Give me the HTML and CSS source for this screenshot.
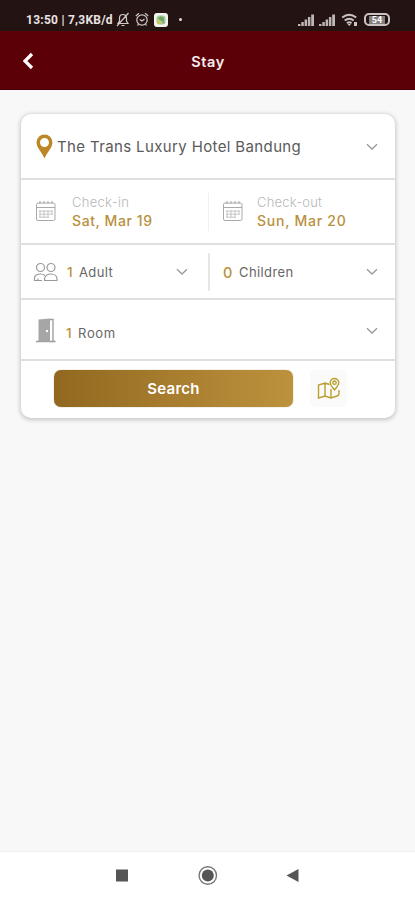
FILE: index.html
```html
<!DOCTYPE html>
<html lang="en">
<head>
<meta charset="utf-8">
<title>Stay</title>
<link rel="stylesheet" href="styles.css">
</head>
<body>
<svg width="0" height="0" class="defs">
  <symbol id="chev" viewBox="0 0 12 8"><path d="M1 1.2 6 6l5-4.8" fill="none" stroke="#999" stroke-width="1.3"/></symbol>
  <symbol id="cal" viewBox="0 0 22 22"><g fill="none" stroke="#a9a9a9"><rect x="1.5" y="3" width="18.500" height="17.500" rx="1.500"/><path d="M1.500 7.500h18.500M5 1v3M9 1v3M13 1v3M17 1v3"/><path d="M4 11.200h13.500M4 14.200h13.500M4 17.200h10M5 10v8M9 10v8M13 10v8M17 10v5" stroke="#c5c5c5" stroke-width="1"/></g></symbol>
  <symbol id="bars" viewBox="0 0 17 12"><path d="M0 10h2.500v2H0zM3.300 8h2.500v4H3.300zM6.600 5.500h2.500V12H6.600zM9.900 3h2.500v9H9.900zM13.200.5h2.800V12h-2.800z" fill="#bdb6b5"/></symbol>
</svg>
<div class="status">
  <span class="clock">13:50 | 7,3KB/d</span>
  <svg class="bell" viewBox="0 0 14 15"><path d="M2 11.500h10L10.500 9V6a3.500 3.500 0 0 0-7 0v3zM5.500 13.500h3M12.500 1 1 14" fill="none" stroke="#cfc9c8" stroke-width="1.200"/></svg>
  <svg class="alarm" viewBox="0 0 14 15"><g fill="none" stroke="#cfc9c8" stroke-width="1.200"><circle cx="7" cy="8" r="5.200"/><path d="M.8 4l3.200-2.700M13.200 4 10 1.300M4.700 7.500 7 9l2.500-2M3.500 12 2.500 13.500M10.500 12l1 1.500"/></g></svg>
  <svg class="app" viewBox="0 0 14 14"><rect width="14" height="14" rx="3" fill="#f1f3ed"/><rect x="2.500" y="2.500" width="9" height="9" rx="3" fill="#a9c795"/><path d="M4 5q3-3 6 0v3H7z" fill="#6da660"/><path d="M3 8l3-1 2 3-3 1z" fill="#d4c84c"/><path d="M8 8l3 1-2 2z" fill="#6aa5b5"/></svg>
  <i class="dot"></i>
  <svg class="sig" viewBox="0 0 17 12"><use href="#bars"/></svg>
  <svg class="sig sig2" viewBox="0 0 17 12"><use href="#bars"/></svg>
  <svg class="wifi" viewBox="0 0 18 14"><g fill="none" stroke="#c9c3c2" stroke-width="2"><path d="M1.200 4.500q7-5.500 14 0M3.700 7.500q4.500-3.500 9 0M6 10.200q2.200-1.800 4.500 0"/></g><path d="M6.500 11h3.500l-1.700 2zM13 9h3v4h-3z" fill="#c9c3c2"/></svg>
  <span class="batt"><b>54</b></span>
</div>
<header class="bar">
  <svg class="back" viewBox="0 0 12 18"><path d="M10 2 3 9l7 7" fill="none" stroke="#fff" stroke-width="3.200"/></svg>
  <h1>Stay</h1>
</header>
<main>
  <section class="card">
    <div class="row hotel">
      <svg class="pin" viewBox="0 0 17 25"><path fill-rule="evenodd" d="M8.500.5A8 8 0 0 0 .5 8.500c0 5 5 9 8 16 3-7 8-11 8-16a8 8 0 0 0-8-8zm0 3.500a4.500 4.500 0 1 1 0 9 4.500 4.500 0 0 1 0-9z" fill="#bd8629"/></svg>
      <span class="name">The Trans Luxury Hotel Bandung</span>
      <svg class="chev"><use href="#chev"/></svg>
    </div>
    <div class="row dates">
      <div class="half">
        <svg class="cal"><use href="#cal"/></svg>
        <div class="date"><span class="label in">Check-in</span><span class="value sat">Sat, Mar 19</span></div>
      </div>
      <div class="half split">
        <svg class="cal"><use href="#cal"/></svg>
        <div class="date"><span class="label out">Check-out</span><span class="value sun">Sun, Mar 20</span></div>
      </div>
    </div>
    <div class="row guests">
      <div class="half">
        <svg class="people" viewBox="0 0 25 20"><g fill="#fff" stroke="#999" stroke-width="1.200"><circle cx="7.500" cy="5.500" r="4"/><circle cx="18" cy="5.500" r="4"/><path d="M9 18.500H1.500v-2c0-3 2.500-4.500 6-4.500 2 0 3.500.5 4.500 1.500"/><path d="M11.500 18.500v-1.500c0-3 3-5 6.500-5s6 2 6 5v1.500zM5 18v-1.500"/></g></svg>
        <span class="count">1</span><span class="unit">Adult</span>
        <svg class="chev"><use href="#chev"/></svg>
      </div>
      <div class="half split">
        <span class="count zero">0</span><span class="unit kids">Children</span>
        <svg class="chev"><use href="#chev"/></svg>
      </div>
    </div>
    <div class="row rooms">
      <svg class="door" viewBox="0 0 20 25"><path d="M0 23.500h19.500" stroke="#999" stroke-width="1.500"/><path d="M14 1.500h3V23.500" fill="none" stroke="#999" stroke-width="1.300"/><path d="M2.500 1.500 14 .5V24L2.500 23.500z" fill="#a6a6a6"/><circle cx="11" cy="13" r="1.200" fill="#fff"/></svg>
      <span class="count">1</span><span class="unit">Room</span>
      <svg class="chev"><use href="#chev"/></svg>
    </div>
    <div class="actions">
      <button class="search">Search</button>
      <button class="mapbtn" aria-label="Map"><svg class="map" viewBox="0 0 23 23"><g fill="none" stroke="#b8a030" stroke-width="1.400"><path d="M12.500 7.500 8 6 1.500 8v13l6.500-2 6 2 6-2q2-.5 2-2.500V13M8 6v13M14 12V21"/><path d="M17.500 13c-1.500-2.500-4.300-4-4.300-7.200a4.300 4.300 0 0 1 8.600 0c0 3.200-2.800 4.700-4.300 7.200z"/><circle cx="17.500" cy="5.700" r="1.700"/></g></svg></button>
    </div>
  </section>
</main>
<nav>
  <svg viewBox="0 0 415 48"><rect x="116" y="17.500" width="12" height="12" fill="#555"/><circle cx="207.800" cy="23.500" r="8.700" fill="none" stroke="#777" stroke-width="1.400"/><circle cx="207.800" cy="23.500" r="6" fill="#555"/><path d="M286.500 23.500 298.500 17v13z" fill="#555"/></svg>
</nav>
</body>
</html>
```

FILE: styles.css
```css
* { box-sizing: border-box; }
body { margin: 0; height: 900px; display: flex; flex-direction: column; overflow: hidden; background: #f8f8f8; font-family: Inter, "Open Sans", sans-serif; }
svg { display: block; flex: none; }
.defs { position: absolute; }
.status { height: 31px; background: #241313; display: flex; align-items: center; padding: 8px 25px 0 26px; }
.clock { width: 88px; color: #e8e3e2; font: 700 12px/14px Roboto, sans-serif; letter-spacing: 0.25px; white-space: nowrap; }
.bell { width: 14px; height: 15px; margin-left: 2px; }
.alarm { width: 14px; height: 15px; margin-left: 5px; }
.app { width: 14px; height: 14px; margin-left: 5px; }
.dot { width: 3px; height: 3px; margin-left: 11px; border-radius: 50%; background: #ddd; }
.sig { width: 17px; height: 12px; margin-left: auto; }
.sig2 { margin-left: 4px; }
.wifi { width: 18px; height: 14px; margin-left: 5px; }
.batt { width: 26px; height: 13px; margin-left: 5px; border: 2px solid #c9c3c2; border-radius: 5px; display: flex; justify-content: center; align-items: center; }
.batt b { padding: 0 3px; background: #857e7e; color: #fff; font: 700 9px/8px Roboto, sans-serif; }
.bar { height: 59px; background: #5c0008; border-bottom: 1px solid #48000a; display: grid; grid-template-columns: 50px 1fr 50px; align-items: center; }
.back { width: 12px; height: 18px; margin: 2px 0 0 22px; }
h1 { margin: 4px 0 0 1px; text-align: center; color: #f7eeee; font-size: 14.5px; line-height: 20px; font-weight: 600; letter-spacing: 0.6px; }
main { flex: 1; padding: 24px 20px 0 21px; }
.card { height: 304px; border-radius: 10px; background: #fff; box-shadow: 0 1px 4px 1px rgba(0,0,0,.2); }
.row { display: flex; align-items: center; border-bottom: 2px solid #dfdfdf; }
.hotel { height: 66px; padding: 0 17px 0 15px; }
.dates { height: 65px; }
.guests { height: 55px; }
.rooms { height: 61px; padding: 2px 17px 0 15px; }
.pin { width: 17px; height: 25px; }
.name { margin-left: 4px; color: #5a5a5a; font-size: 15px; letter-spacing: 0.37px; white-space: nowrap; }
.chev { width: 12px; height: 8px; margin: 1px 0 0 auto; }
.half { width: 187px; height: 100%; display: flex; align-items: center; padding-left: 14px; padding-right: 20px; }
.split { background: linear-gradient(#e6e6e6, #e6e6e6) 0 center / 2px 38px no-repeat; padding-right: 17px; }
.dates .split { background-image: linear-gradient(#f0f0f0, #f0f0f0); background-position: -1px center; }
.cal { width: 22px; height: 22px; margin-top: -2px; }
.date { margin-left: 15px; display: flex; flex-direction: column; white-space: nowrap; }
.split .date { margin-left: 13px; }
.label { color: #b8b8b8; font-size: 13px; line-height: 18px; font-weight: 300; letter-spacing: 0.3px; }
.out { letter-spacing: 0.2px; }
.value { color: #b9903c; font-size: 14px; line-height: 20px; font-weight: 500; letter-spacing: 0.6px; }
.sun { letter-spacing: 0.75px; }
.guests .half:first-child { padding-left: 12px; }
.people { width: 25px; height: 20px; }
.count { width: 12px; margin-left: 9px; color: #b9903c; font-size: 13.5px; font-weight: 500; padding-top: 1px; }
.unit { color: #666; font-size: 13px; letter-spacing: 0.4px; padding-top: 1px; }
.zero { margin-left: 1px; width: 16px; font-size: 14.5px; }
.door { width: 20px; height: 25px; }
.rooms .count { margin-left: 10px; }
.rooms .count, .rooms .unit { padding-top: 4px; }
.rooms .unit { letter-spacing: 0.7px; }
.actions { height: 57px; display: flex; align-items: center; padding: 0 0 2px 33px; }
button { border: 0; padding: 0; font-family: inherit; }
.search { width: 239px; height: 37px; border-radius: 7px; background: linear-gradient(90deg, #926820, #bd923d); box-shadow: 0 0 1px #8b6b35; color: #fff; font-size: 15px; font-weight: 600; letter-spacing: 0.3px; }
.mapbtn { width: 37px; height: 37px; margin-left: 17px; border-radius: 5px; background: #fafafa; display: grid; place-items: center; }
.map { width: 23px; height: 23px; }
nav { height: 49px; background: #fff; border-top: 1px solid #f0f0f0; }
nav svg { width: 415px; height: 48px; }
```
